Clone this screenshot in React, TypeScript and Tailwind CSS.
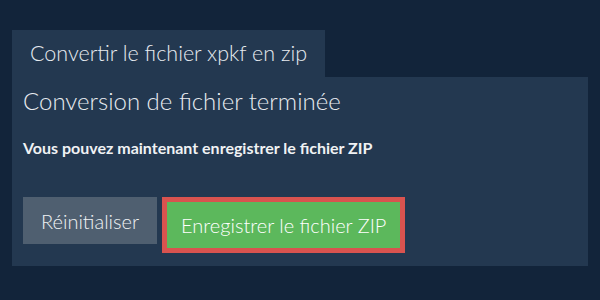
import React from 'react';

const App = () => {
  return (
    <div className="min-h-[300px] bg-[#12243a] px-3 pt-[30px] font-['Lato','Liberation_Sans',sans-serif]">
      {/* Onglet */}
      <div className="inline-flex h-[47px] items-center bg-[#233850] px-[18px] text-[21.5px] font-light text-[#e8ecf0]">
        Convertir le fichier xpkf en zip
      </div>

      {/* Panneau */}
      <div className="h-[189px] bg-[#233850] px-[11px] pt-[8px]">
        <h2 className="text-[24px] font-light leading-[32px] text-[#e8ecf0]">Conversion de fichier terminée</h2>
        <p className="mt-[20px] text-[16px] font-bold leading-[22px] text-[#f0f2f4]">
          Vous pouvez maintenant enregistrer le fichier ZIP
        </p>
        <div className="mt-[38px] flex items-start gap-[5px]">
          <button className="h-[47px] bg-[#4f5f70] px-[18px] text-[20px] font-light text-[#f0f2f4]">Réinitialiser</button>
          <button className="h-[56px] border-[5px] border-[#d9534f] bg-[#5cb85c] px-[14px] text-[20px] font-light text-white">
            Enregistrer le fichier ZIP
          </button>
        </div>
      </div>
    </div>
  );
};

export default App;
